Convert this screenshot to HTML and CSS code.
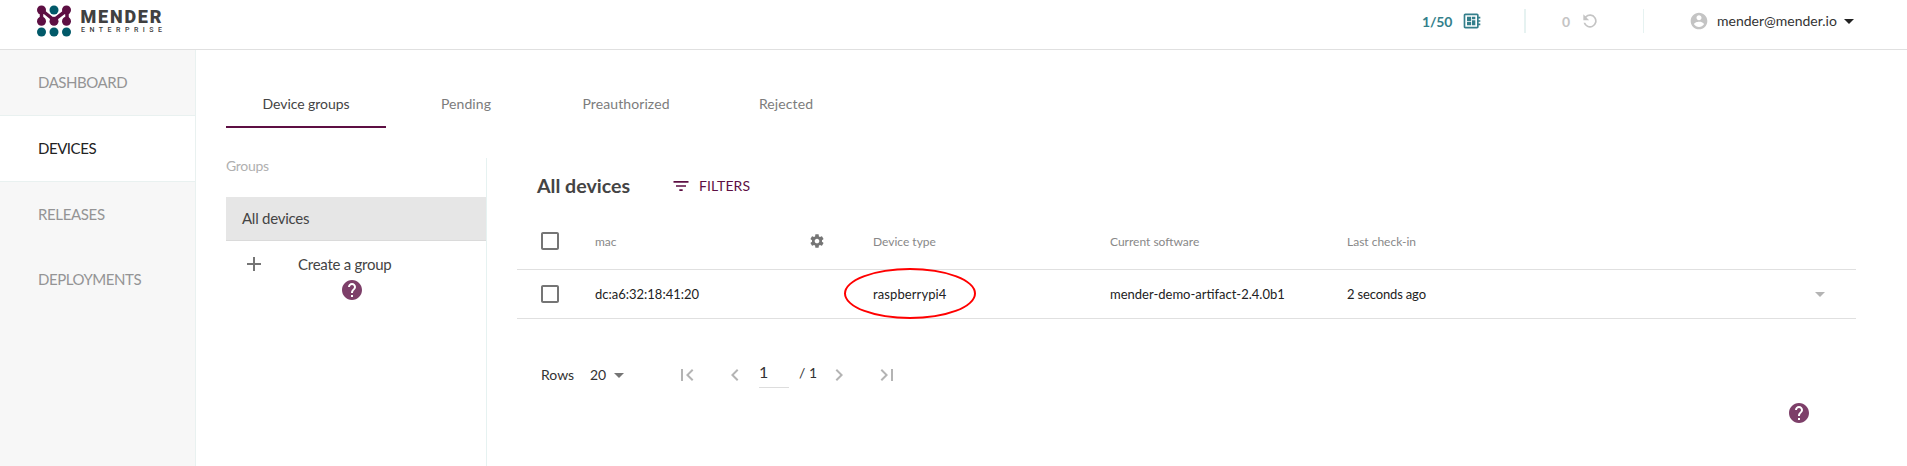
FILE: index.html
```html
<!DOCTYPE html>
<html lang="en">
<head>
<meta charset="utf-8">
<title>Mender - Devices</title>
<link rel="stylesheet" href="styles.css">
</head>
<body>
<svg class="symbols" aria-hidden="true">
  <symbol id="board" viewBox="0 0 24 24"><path d="M22 9V7h-2V5c0-1.100-.9-2-2-2H4c-1.100 0-2 .9-2 2v14c0 1.100.9 2 2 2h14c1.100 0 2-.9 2-2v-2h2v-2h-2v-2h2v-2h-2V9h2zm-4 10H4V5h14v14zM6 13h5v4H6zm6-6h4v3h-4zM6 7h5v5H6zm6 4h4v6h-4z"/></symbol>
  <symbol id="replay" viewBox="0 0 24 24"><path d="M6.350 6.350A8 8 0 1 1 4.260 14h2.080A6 6 0 1 0 7.760 7.760L11 11H4V4z"/></symbol>
  <symbol id="account" viewBox="0 0 24 24"><path d="M12 2C6.480 2 2 6.480 2 12s4.480 10 10 10 10-4.480 10-10S17.520 2 12 2zm0 3c1.660 0 3 1.340 3 3s-1.340 3-3 3-3-1.340-3-3 1.340-3 3-3zm0 14.200c-2.500 0-4.710-1.280-6-3.220.03-1.990 4-3.080 6-3.080 1.990 0 5.970 1.090 6 3.080-1.290 1.940-3.500 3.220-6 3.220z"/></symbol>
  <symbol id="caret" viewBox="0 0 24 24"><path d="M7 10l5 5 5-5z"/></symbol>
  <symbol id="plus" viewBox="0 0 24 24"><path d="M19 13h-6v6h-2v-6H5v-2h6V5h2v6h6v2z"/></symbol>
  <symbol id="help" viewBox="0 0 24 24"><path d="M12 2C6.480 2 2 6.480 2 12s4.480 10 10 10 10-4.480 10-10S17.520 2 12 2zm1 17h-2v-2h2v2zm2.070-7.750l-.9.920C13.450 12.900 13 13.500 13 15h-2v-.5c0-1.100.45-2.100 1.170-2.830l1.240-1.260c.37-.36.59-.86.59-1.410 0-1.100-.9-2-2-2s-2 .9-2 2H8c0-2.210 1.790-4 4-4s4 1.790 4 4c0 .88-.36 1.680-.93 2.250z"/></symbol>
  <symbol id="filter" viewBox="0 0 24 24"><path d="M10 18h4v-2h-4v2zM3 6v2h18V6H3zm3 7h12v-2H6v2z"/></symbol>
  <symbol id="box" viewBox="0 0 24 24"><path d="M19 5v14H5V5h14m0-2H5c-1.100 0-2 .9-2 2v14c0 1.100.9 2 2 2h14c1.100 0 2-.9 2-2V5c0-1.100-.9-2-2-2z"/></symbol>
  <symbol id="gear" viewBox="0 0 24 24"><path d="M19.430 12.980c.04-.32.070-.64.070-.98s-.03-.66-.07-.98l2.110-1.650c.19-.15.24-.42.120-.64l-2-3.460c-.12-.22-.39-.3-.61-.22l-2.490 1c-.52-.4-1.080-.73-1.690-.98l-.38-2.650C14.460 2.180 14.250 2 14 2h-4c-.25 0-.46.180-.49.420l-.38 2.650c-.61.250-1.170.590-1.690.98l-2.490-1c-.23-.09-.49 0-.61.220l-2 3.460c-.13.220-.07.490.12.640l2.110 1.650c-.04.320-.07.650-.07.980s.03.660.07.980l-2.110 1.650c-.19.150-.24.420-.12.640l2 3.460c.12.220.39.300.61.220l2.490-1c.52.400 1.080.730 1.690.980l.38 2.650c.03.240.24.420.49.420h4c.25 0 .46-.18.490-.42l.38-2.650c.61-.25 1.170-.59 1.690-.98l2.490 1c.23.090.49 0 .61-.22l2-3.460c.12-.22.070-.49-.12-.64l-2.110-1.650zM12 15.500c-1.930 0-3.500-1.570-3.500-3.500s1.570-3.500 3.500-3.500 3.500 1.570 3.500 3.500-1.570 3.500-3.500 3.500z"/></symbol>
  <symbol id="left" viewBox="0 0 24 24"><path d="M15.410 7.410L14 6l-6 6 6 6 1.410-1.410L10.830 12z"/></symbol>
  <symbol id="right" viewBox="0 0 24 24"><path d="M10 6L8.590 7.410 13.170 12l-4.580 4.590L10 18l6-6z"/></symbol>
  <symbol id="first" viewBox="0 0 24 24"><path d="M18.410 16.590L13.820 12l4.590-4.590L17 6l-6 6 6 6zM6 6h2v12H6z"/></symbol>
  <symbol id="last" viewBox="0 0 24 24"><path d="M5.590 7.410L10.180 12l-4.590 4.590L7 18l6-6-6-6zM16 6h2v12h-2z"/></symbol>
</svg>

<header class="header">
  <svg class="logo" viewBox="0 0 130 40">
    <path class="logo-link" d="M5.500 10L18 20 31 10M5.500 10V21M31 10V21"/>
    <g class="logo-plum"><circle cx="5.500" cy="10" r="4.500"/><circle cx="30.500" cy="10" r="4.500"/><circle cx="5.500" cy="21.200" r="4.500"/><circle cx="18" cy="21.200" r="4.500"/><circle cx="30.500" cy="21.200" r="4.500"/></g>
    <g class="logo-teal"><circle cx="18" cy="10" r="4.500"/><circle cx="5.500" cy="32" r="4.500"/><circle cx="18" cy="32" r="4.500"/><circle cx="30.500" cy="32" r="4.500"/></g>
    <text class="logo-name" x="44.500" y="23" textLength="81">MENDER</text>
    <text class="logo-edition" x="45" y="32" textLength="81">ENTERPRISE</text>
  </svg>
  <div class="device-count">1/50<svg class="icon i20"><use href="#board"/></svg></div>
  <div class="deploy-count">0<svg class="icon i20"><use href="#replay"/></svg></div>
  <div class="user"><svg class="icon i20"><use href="#account"/></svg><span class="user-name">mender@mender.io</span><svg class="icon i24"><use href="#caret"/></svg></div>
</header>

<div class="body">
  <nav class="sidebar">
    <a class="nav-item">DASHBOARD</a>
    <a class="nav-item active">DEVICES</a>
    <a class="nav-item">RELEASES</a>
    <a class="nav-item last">DEPLOYMENTS</a>
  </nav>
  <main class="main">
    <div class="tabs">
      <div class="tab selected">Device groups</div>
      <div class="tab">Pending</div>
      <div class="tab">Preauthorized</div>
      <div class="tab">Rejected</div>
    </div>
    <div class="content">
      <aside class="groups">
        <div class="groups-title">Groups</div>
        <div class="group">All devices</div>
        <div class="create"><svg class="icon i24"><use href="#plus"/></svg><span class="create-label">Create a group</span></div>
        <svg class="icon i24 help group-help"><use href="#help"/></svg>
      </aside>
      <section class="devices">
        <div class="title-row"><h2 class="title">All devices</h2><div class="filters"><svg class="icon filter-icon"><use href="#filter"/></svg>FILTERS</div></div>
        <div class="row head">
          <svg class="icon i24 check"><use href="#box"/></svg>
          <div class="cell mac">mac<svg class="icon gear"><use href="#gear"/></svg></div>
          <div class="cell">Device type</div>
          <div class="cell">Current software</div>
          <div class="cell">Last check-in</div>
        </div>
        <div class="row">
          <svg class="icon i24 check"><use href="#box"/></svg>
          <div class="cell mac">dc:a6:32:18:41:20</div>
          <div class="cell marked">raspberrypi4<span class="marker"></span></div>
          <div class="cell">mender-demo-artifact-2.4.0b1</div>
          <div class="cell seen">2 seconds ago</div>
          <svg class="icon i24 expand"><use href="#caret"/></svg>
        </div>
        <div class="pager">
          <span class="rows-label">Rows</span><span class="rows-value">20</span><svg class="icon i24 rows-caret"><use href="#caret"/></svg>
          <svg class="icon i24 first"><use href="#first"/></svg>
          <svg class="icon i24 prev"><use href="#left"/></svg>
          <span class="page-input">1</span><span class="page-total">/ 1</span>
          <svg class="icon i24 next"><use href="#right"/></svg>
          <svg class="icon i24 end"><use href="#last"/></svg>
        </div>
        <svg class="icon i24 help page-help"><use href="#help"/></svg>
      </section>
    </div>
  </main>
</div>
</body>
</html>
```

FILE: styles.css
```css
* { box-sizing: border-box; }
body { margin: 0; height: 466px; overflow: hidden; display: flex; flex-direction: column; background: #fff; color: #444; font-family: Lato, "Liberation Sans", sans-serif; font-size: 14px; }
.symbols { display: none; }
.icon { display: block; flex: none; fill: currentColor; }
.i20 { width: 20px; height: 20px; }
.i24 { width: 24px; height: 24px; }

.header { height: 50px; flex: none; display: flex; align-items: flex-start; border-bottom: 1px solid #e0e0e0; }
.logo { width: 130px; height: 40px; margin-left: 36px; }
.logo-link { fill: none; stroke: #5d0f43; stroke-width: 3.500px; }
.logo-plum { fill: #5d0f43; }
.logo-teal { fill: #015969; }
.logo-name { font: 900 18px Roboto, sans-serif; fill: #404041; }
.logo-edition { font: 500 7px Roboto, sans-serif; fill: #404041; }
.device-count, .deploy-count, .user { display: flex; align-items: center; height: 24px; margin-top: 9px; }
.device-count { width: 104px; margin-left: 1256px; border-right: 2px solid #e6f2f1; color: #347f8b; font-weight: 700; font-size: 14px; letter-spacing: -.2px; }
.device-count .icon { margin-left: 10px; }
.deploy-count { width: 118px; padding-left: 36px; border-right: 1px solid #e6f2f1; color: #c4c4c4; font-weight: 700; }
.deploy-count .icon { margin-left: 10px; }
.user { margin-left: 45px; color: #c4c4c4; }
.user-name { width: 120px; margin-left: 8px; padding-bottom: 1px; color: #333; white-space: nowrap; }
.user > .icon:last-child { color: #222; }

.body { flex: 1; display: flex; min-height: 0; }
.sidebar { width: 196px; flex: none; background: #f7f7f7; border-right: 1px solid #e9f1f0; }
.nav-item { display: flex; align-items: center; height: 66px; padding: 0 0 2px 38px; border-bottom: 1px solid #e9f1f0; color: #949495; font-size: 15px; letter-spacing: -.45px; }
.nav-item.active { background: #fff; color: #222; }
.nav-item.active + .nav-item { border-bottom-color: transparent; letter-spacing: -.35px; }
.nav-item.last { padding-bottom: 5px; border-bottom: 0; }
.main { flex: 1; display: flex; flex-direction: column; padding: 30px 0 0 30px; }
.tabs { display: flex; height: 48px; flex: none; }
.tab { width: 160px; display: flex; align-items: center; justify-content: center; border-bottom: 2px solid transparent; color: #7c7c7c; letter-spacing: .1px; }
.tab.selected { color: #444; border-color: #5d0f43; letter-spacing: -.06px; }
.content { flex: 1; display: flex; margin-top: 30px; }
.groups { width: 261px; border-right: 1px solid #e6f2f1; }
.groups-title { height: 39px; line-height: 16px; color: #b0b0b0; letter-spacing: -.3px; }
.group { display: flex; align-items: center; height: 44px; padding: 0 0 2px 16px; background: #e6e6e6; border-bottom: 1px solid #dadada; font-size: 15px; letter-spacing: -.25px; }
.create { display: flex; align-items: center; height: 47px; padding: 0 0 1px 16px; font-size: 15px; letter-spacing: -.25px; }
.create .icon { color: #757575; }
.create-label { margin-left: 32px; padding-bottom: 1px; }
.help { color: #7d3f69; }
.group-help { margin: -10px 0 0 114px; }
.devices { width: 1339px; margin-left: 30px; }
.title-row { display: flex; align-items: center; height: 56px; padding: 0 0 1px 20px; }
.title { width: 134px; margin: 0; font-size: 19.600px; line-height: 24px; }
.filters { display: flex; align-items: center; color: #5d0f43; letter-spacing: .1px; }
.filter-icon { width: 20px; height: 20px; margin-right: 8px; }
.row { display: flex; align-items: center; height: 49px; border-bottom: 1px solid #e0e0e0; color: #222; font-size: 13px; }
.row.head { height: 56px; padding-bottom: 1px; color: #888; font-size: 12px; }
.check { margin: 0 33px 0 21px; color: #757575; }
.cell { width: 237px; white-space: nowrap; }
.mac { width: 278px; display: flex; align-items: center; }
.gear { width: 16px; height: 16px; margin-left: auto; margin-right: 48px; color: #757575; }
.marked { position: relative; letter-spacing: .1px; }
.seen { letter-spacing: -.15px; }
.marker { position: absolute; left: -29px; top: -18px; width: 132px; height: 51px; border: 2px solid #f00; border-radius: 50%; }
.expand { margin-left: 224px; color: #b4b4b4; }
.pager { display: flex; align-items: center; height: 40px; margin-top: 36px; padding-left: 24px; color: #333; }
.pager .icon { color: #b4b4b4; }
.rows-label { width: 49px; padding-bottom: 1px; }
.rows-value { width: 17px; padding-bottom: 1px; }
.pager .rows-caret { color: #757575; }
.first { margin-left: 44px; }
.prev { margin-left: 24px; }
.page-input { width: 30px; height: 31px; margin-left: 12px; margin-top: -5px; border-bottom: 1px solid #ddd; font-size: 16px; line-height: 29px; }
.page-total { width: 38px; padding-left: 10px; margin-top: -5px; }
.end { margin-left: 24px; }
.page-help { margin: 6px 0 0 1270px; }
```
